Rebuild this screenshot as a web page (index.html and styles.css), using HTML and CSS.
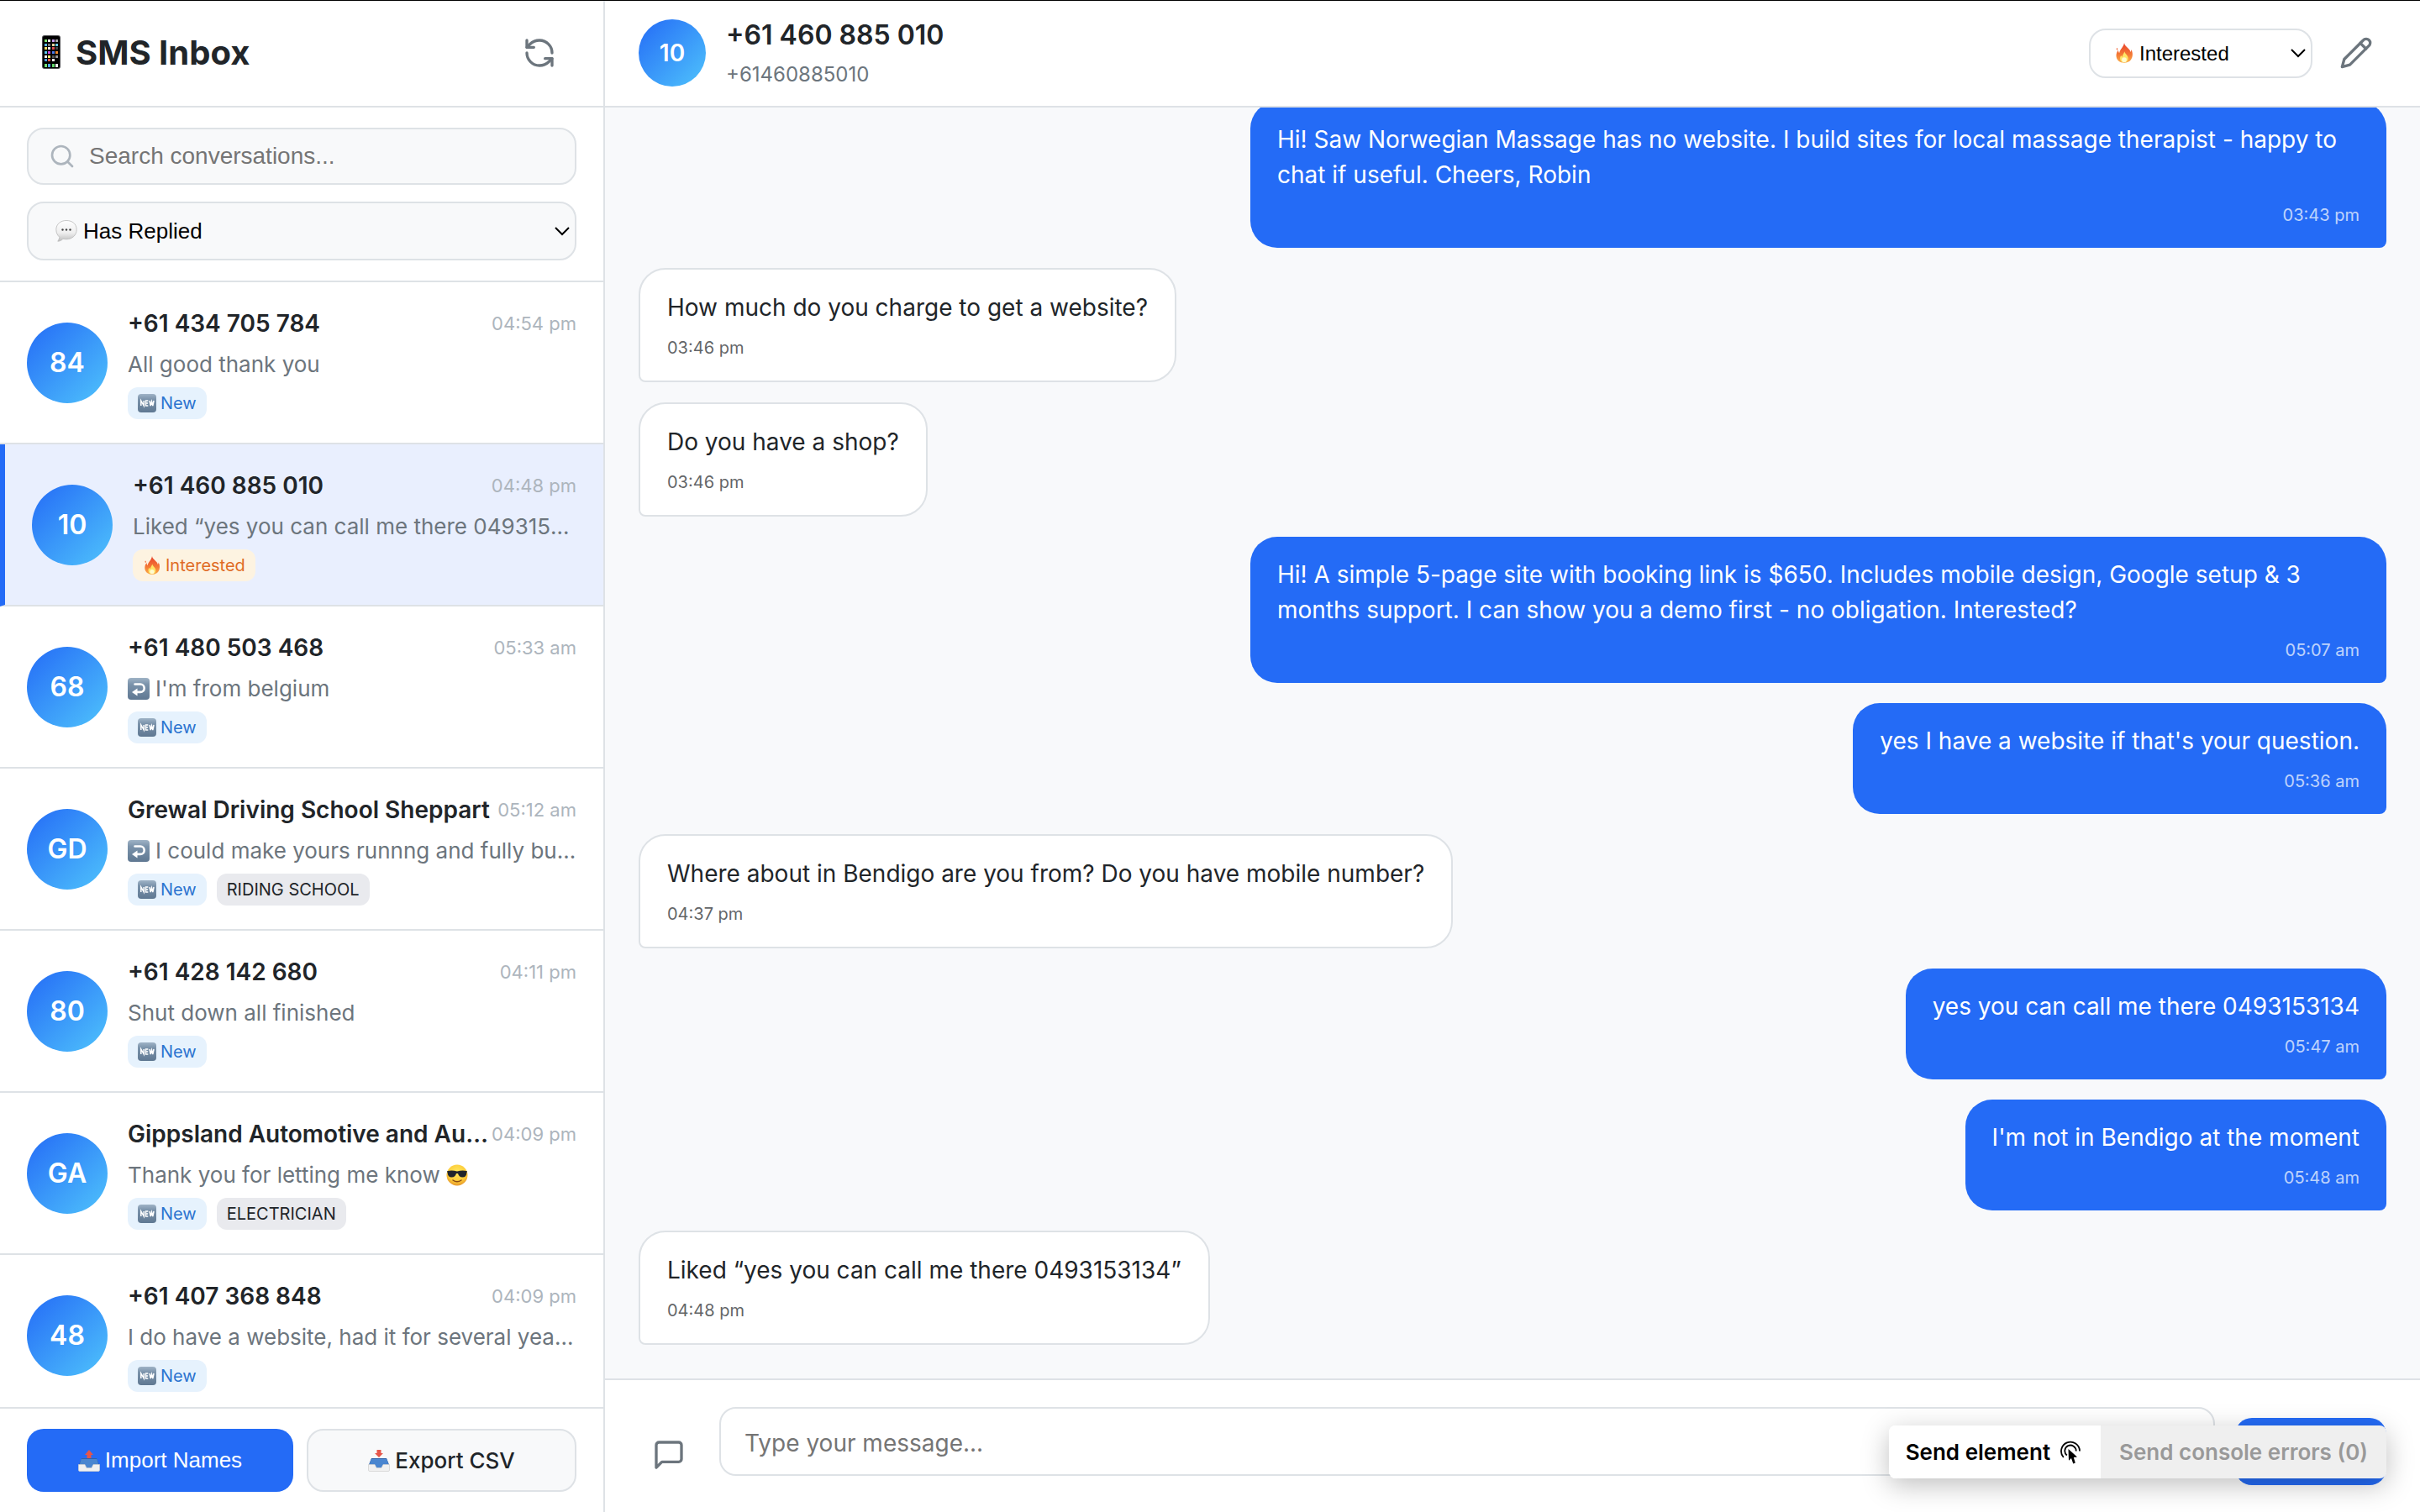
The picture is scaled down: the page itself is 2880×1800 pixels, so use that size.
FILE: index.html
```html
<!DOCTYPE html>
<html lang="en">
<head>
<meta charset="utf-8">
<title>SMS Inbox</title>
<link rel="stylesheet" href="styles.css">
</head>
<body>
<svg class="sprite" aria-hidden="true">
  <defs>
    <linearGradient id="g-tile" x1="0" y1="0" x2="0" y2="1"><stop offset="0" stop-color="#9fb3c6"/><stop offset=".3" stop-color="#7b93ab"/><stop offset="1" stop-color="#5f7892"/></linearGradient>
    <linearGradient id="g-fire" x1="0" y1="0" x2="0" y2="1"><stop offset="0" stop-color="#e8402a"/><stop offset=".6" stop-color="#f47a35"/><stop offset="1" stop-color="#fbb04a"/></linearGradient>
    <linearGradient id="g-bubble" x1="0" y1="0" x2="0" y2="1"><stop offset="0" stop-color="#ffffff"/><stop offset=".6" stop-color="#eeeeee"/><stop offset="1" stop-color="#bdbdbd"/></linearGradient>
    <radialGradient id="g-face" cx=".5" cy=".35" r=".65"><stop offset="0" stop-color="#ffe95c"/><stop offset=".7" stop-color="#fcc938"/><stop offset="1" stop-color="#e5962a"/></radialGradient>
  </defs>
  <symbol id="e-phone" viewBox="0 0 22 40">
    <rect x="0" y="0" width="22" height="40" rx="3" fill="#4a4a4e"/><rect x="1" y="1" width="20" height="38" rx="2" fill="#000"/>
    <g><rect x="3" y="5" width="3" height="3" fill="#7be06c"/><rect x="7" y="5" width="3" height="3" fill="#fff"/><rect x="12" y="5" width="3" height="3" fill="#c79af0"/><rect x="16" y="5" width="3" height="3" fill="#a8a8a8"/>
    <rect x="3" y="10" width="3" height="3" fill="#5ab8f5"/><rect x="7" y="10" width="3" height="3" fill="#777"/><rect x="12" y="10" width="3" height="3" fill="#e8d6a0"/><rect x="16" y="10" width="3" height="3" fill="#6ccdf5"/>
    <rect x="3" y="14" width="3" height="3" fill="#f2e06a"/><rect x="7" y="14" width="3" height="3" fill="#eee"/><rect x="12" y="14" width="3" height="3" fill="#e04a50"/><rect x="16" y="14" width="3" height="3" fill="#444"/>
    <rect x="3" y="19" width="3" height="3" fill="#58c7ee"/><rect x="7" y="19" width="3" height="3" fill="#c44be0"/><rect x="12" y="19" width="3" height="3" fill="#4b7de8"/><rect x="16" y="19" width="3" height="3" fill="#f08a2c"/>
    <rect x="3" y="24" width="3" height="3" fill="#fff"/><rect x="7" y="24" width="3" height="3" fill="#f5ec70"/><rect x="12" y="24" width="3" height="3" fill="#555"/><rect x="16" y="24" width="3" height="3" fill="#999"/>
    <rect x="3" y="28" width="3" height="3" fill="#4a9df0"/><rect x="7" y="28" width="3" height="3" fill="#e85a48"/><rect x="12" y="28" width="3" height="3" fill="#fff"/>
    <rect x="3" y="34" width="3" height="4" fill="#72e070"/><rect x="7" y="34" width="3" height="4" fill="#51a8f2"/><rect x="12" y="34" width="3" height="4" fill="#63d86a"/><rect x="16" y="34" width="3" height="4" fill="#f2f2f2"/></g>
  </symbol>
  <symbol id="e-speech" viewBox="0 0 26 26">
    <path d="M13 .5C6 .5.8 5 .8 11.300c0 4 1.800 7 4 9-.2 2-1 3.600-2 4.900 2.500 0 4.700-1.200 6.200-2.900 1.200.3 2.600.5 4 .5 7 0 12.200-4.900 12.200-11.500S20 .5 13 .5z" fill="url(#g-bubble)" stroke="#b9b9b9" stroke-width=".8"/>
    <circle cx="8.500" cy="11.500" r="1.200" fill="#444"/><circle cx="13" cy="11.500" r="1.200" fill="#444"/><circle cx="17.500" cy="11.500" r="1.200" fill="#444"/>
  </symbol>
  <symbol id="e-new" viewBox="0 0 22 22">
    <rect width="22" height="22" rx="4" fill="url(#g-tile)"/>
    <path d="M3.800 14V8l3.400 6V8M12.300 8H9.500v6h2.800M9.500 11h2.600M14 8l1.200 6 1.300-5 1.300 5L19 8" fill="none" stroke="#fff" stroke-width="1.500"/>
  </symbol>
  <symbol id="e-reply" viewBox="0 0 26 26">
    <rect width="26" height="26" rx="4" fill="url(#g-tile)"/>
    <path d="M8.500 7.500h6.500a4.700 4.700 0 0 1 0 9.400H9" fill="none" stroke="#fff" stroke-width="2.600" stroke-linecap="round"/><path d="M5 17l6.500-4.500v9z" fill="#fff"/>
  </symbol>
  <symbol id="e-fire" viewBox="0 0 22 22">
    <path d="M11 0c.3 4 6.300 6 6.800 10 .6-.8.800-1.600.800-2.600 2 3.200 2 7.800-.2 11-1.600 2.400-4.400 3.400-7.400 3.400-5 0-8.700-3-8.700-7.800 0-2.600 1-4.400 2.200-6 .1 1.400.4 2.300 1.200 3C6.200 7 10.500 4.500 11 0z" fill="url(#g-fire)"/>
    <path d="M3 5.500c1 .6 1.200 1.600.4 2.600-1-.6-1.200-1.600-.4-2.600z" fill="#f2683a"/>
    <path d="M11.300 9.500c.3 2.500 4 4.300 4 7.500 0 2.700-2 4.300-4.400 4.300S6.500 19.700 6.500 17c0-1.400.5-2.400 1.200-3.200.2.8.6 1.200 1.200 1.500.1-2.200 1.800-3.600 2.400-5.800z" fill="#ffe566"/>
    <ellipse cx="11" cy="18.500" rx="2.600" ry="2.600" fill="#fffbd0"/>
  </symbol>
  <symbol id="e-cool" viewBox="0 0 26 26">
    <circle cx="13" cy="13" r="12.500" fill="url(#g-face)"/>
    <path d="M1 8.200c4-1 8-.9 12 .3 4-1.200 8-1.300 12-.3l-.6 2c-.3 3.600-1.900 5.300-4.900 5.300-3.200 0-4.800-2-5.500-4.500h-2c-.7 2.500-2.300 4.500-5.500 4.500-3 0-4.600-1.700-4.900-5.300z" fill="#20242c"/>
    <path d="M8 19c3 2.200 7 2.200 10 0" fill="none" stroke="#8a4b16" stroke-width="1.500" stroke-linecap="round"/>
  </symbol>
  <symbol id="e-tray" viewBox="0 0 26 17">
    <path d="M4 1h18l3.200 8H.8z" fill="#2f62a8"/><path d="M3.600 2h18.800l2 7H18l-2 3.500h-6L8 9H1.600z" fill="#4a86d0"/>
    <path d="M.5 8.500H8l2 4h6l2-4h7.500V15a1.500 1.500 0 0 1-1.500 1.500H2A1.500 1.500 0 0 1 .5 15z" fill="#f1f1f1" stroke="#cfcfcf" stroke-width=".7"/>
  </symbol>
  <symbol id="e-outbox" viewBox="0 0 26 26"><use href="#e-tray" y="9" width="26" height="17"/><path d="M13 0l5 6h-2.500v4h-5V6H8z" fill="#e5564a"/></symbol>
  <symbol id="e-inbox" viewBox="0 0 26 26"><use href="#e-tray" y="9" width="26" height="17"/><path d="M13 9l5-5h-2.500V0h-5v4H8z" fill="#e5564a"/></symbol>
  <symbol id="i-chevron" viewBox="0 0 18 12"><path d="M1 2l8 8 8-8" fill="none" stroke="#000" stroke-width="2"/></symbol>
</svg>

<div class="app">
  <aside class="sidebar">
    <header class="bar sidebar-bar">
      <h1 class="title"><svg class="emoji-phone" aria-hidden="true"><use href="#e-phone"/></svg>SMS Inbox</h1>
      <button class="icon-btn" type="button" aria-label="Refresh">
        <svg class="icon" viewBox="0 0 24 24"><path d="M21 12a9 9 0 0 0-9-9 9.750 9.750 0 0 0-6.740 2.740L3 8"/><path d="M3 3v5h5"/><path d="M3 12a9 9 0 0 0 9 9 9.750 9.750 0 0 0 6.740-2.740L21 16"/><path d="M16 16h5v5"/></svg>
      </button>
    </header>

    <div class="filters">
      <label class="search">
        <svg class="search-icon" viewBox="0 0 24 24"><circle cx="11" cy="11" r="8"/><path d="M21 21l-4.350-4.350"/></svg>
        <input class="search-input" type="text" placeholder="Search conversations..." aria-label="Search conversations">
      </label>
      <div class="select-wrap">
        <svg class="select-emoji" aria-hidden="true"><use href="#e-speech"/></svg>
        <select class="select filter-select" aria-label="Filter conversations"><option>Has Replied</option></select>
        <svg class="select-chevron" aria-hidden="true"><use href="#i-chevron"/></svg>
      </div>
    </div>

    <ul class="list">
      <li class="item">
        <span class="avatar">84</span>
        <div class="item-body">
          <div class="item-top"><span class="name">+61 434 705 784</span><time class="item-time">04:54 pm</time></div>
          <p class="preview">All good thank you</p>
          <div class="tags"><span class="tag tag-new"><svg class="tag-emoji"><use href="#e-new"/></svg>New</span></div>
        </div>
      </li>
      <li class="item item-active">
        <span class="avatar">10</span>
        <div class="item-body">
          <div class="item-top"><span class="name">+61 460 885 010</span><time class="item-time">04:48 pm</time></div>
          <p class="preview">Liked “yes you can call me there 0493153134”</p>
          <div class="tags"><span class="tag tag-interested"><svg class="tag-emoji"><use href="#e-fire"/></svg>Interested</span></div>
        </div>
      </li>
      <li class="item">
        <span class="avatar">68</span>
        <div class="item-body">
          <div class="item-top"><span class="name">+61 480 503 468</span><time class="item-time">05:33 am</time></div>
          <p class="preview"><svg class="text-emoji lead"><use href="#e-reply"/></svg>I'm from belgium</p>
          <div class="tags"><span class="tag tag-new"><svg class="tag-emoji"><use href="#e-new"/></svg>New</span></div>
        </div>
      </li>
      <li class="item">
        <span class="avatar">GD</span>
        <div class="item-body">
          <div class="item-top"><span class="name">Grewal Driving School Sheppart</span><time class="item-time">05:12 am</time></div>
          <p class="preview"><svg class="text-emoji lead"><use href="#e-reply"/></svg>I could make yours runnng and fully built for you</p>
          <div class="tags"><span class="tag tag-new"><svg class="tag-emoji"><use href="#e-new"/></svg>New</span><span class="tag tag-type">RIDING SCHOOL</span></div>
        </div>
      </li>
      <li class="item">
        <span class="avatar">80</span>
        <div class="item-body">
          <div class="item-top"><span class="name">+61 428 142 680</span><time class="item-time">04:11 pm</time></div>
          <p class="preview">Shut down all finished</p>
          <div class="tags"><span class="tag tag-new"><svg class="tag-emoji"><use href="#e-new"/></svg>New</span></div>
        </div>
      </li>
      <li class="item">
        <span class="avatar">GA</span>
        <div class="item-body">
          <div class="item-top"><span class="name">Gippsland Automotive and Auto Electrics</span><time class="item-time">04:09 pm</time></div>
          <p class="preview">Thank you for letting me know <svg class="text-emoji"><use href="#e-cool"/></svg></p>
          <div class="tags"><span class="tag tag-new"><svg class="tag-emoji"><use href="#e-new"/></svg>New</span><span class="tag tag-type">ELECTRICIAN</span></div>
        </div>
      </li>
      <li class="item">
        <span class="avatar">48</span>
        <div class="item-body">
          <div class="item-top"><span class="name">+61 407 368 848</span><time class="item-time">04:09 pm</time></div>
          <p class="preview">I do have a website, had it for several years now</p>
          <div class="tags"><span class="tag tag-new"><svg class="tag-emoji"><use href="#e-new"/></svg>New</span></div>
        </div>
      </li>
    </ul>

    <footer class="actions">
      <button class="btn btn-primary" type="button"><svg class="text-emoji"><use href="#e-outbox"/></svg>Import Names</button>
      <button class="btn btn-outline" type="button"><svg class="text-emoji"><use href="#e-inbox"/></svg>Export CSV</button>
    </footer>
  </aside>

  <main class="chat">
    <header class="bar chat-bar">
      <span class="avatar avatar-small">10</span>
      <div class="contact">
        <h2 class="contact-name">+61 460 885 010</h2>
        <p class="contact-phone">+61460885010</p>
      </div>
      <div class="select-wrap status-wrap">
        <svg class="select-emoji status-emoji" aria-hidden="true"><use href="#e-fire"/></svg>
        <select class="select status-select" aria-label="Lead status"><option>Interested</option></select>
        <svg class="select-chevron" aria-hidden="true"><use href="#i-chevron"/></svg>
      </div>
      <button class="icon-btn" type="button" aria-label="Edit contact">
        <svg class="icon" viewBox="0 0 24 24"><path d="M17 3a2.850 2.830 0 1 1 4 4L7.500 20.500 2 22l1.500-5.500z"/><path d="M15 5l4 4"/></svg>
      </button>
    </header>

    <section class="messages">
      <article class="bubble sent"><p class="text">Hi! Saw Norwegian Massage has no website. I build sites for local massage therapist - happy to chat if useful. Cheers, Robin</p><time class="stamp">03:43 pm</time></article>
      <article class="bubble received"><p class="text">How much do you charge to get a website?</p><time class="stamp">03:46 pm</time></article>
      <article class="bubble received"><p class="text">Do you have a shop?</p><time class="stamp">03:46 pm</time></article>
      <article class="bubble sent"><p class="text">Hi! A simple 5-page site with booking link is $650. Includes mobile design, Google setup &amp; 3 months support. I can show you a demo first - no obligation. Interested?</p><time class="stamp">05:07 am</time></article>
      <article class="bubble sent"><p class="text">yes I have a website if that's your question.</p><time class="stamp">05:36 am</time></article>
      <article class="bubble received"><p class="text">Where about in Bendigo are you from? Do you have mobile number?</p><time class="stamp">04:37 pm</time></article>
      <article class="bubble sent"><p class="text">yes you can call me there 0493153134</p><time class="stamp">05:47 am</time></article>
      <article class="bubble sent"><p class="text">I'm not in Bendigo at the moment</p><time class="stamp">05:48 am</time></article>
      <article class="bubble received"><p class="text">Liked “yes you can call me there 0493153134”</p><time class="stamp">04:48 pm</time></article>
    </section>

    <form class="composer">
      <button class="icon-btn" type="button" aria-label="Templates">
        <svg class="icon" viewBox="0 0 24 24"><path d="M21 15a2 2 0 0 1-2 2H7l-4 4V5a2 2 0 0 1 2-2h14a2 2 0 0 1 2 2z"/></svg>
      </button>
      <div class="field"><textarea class="message-input" rows="1" placeholder="Type your message..." aria-label="Message"></textarea></div>
      <button class="send" type="submit" aria-label="Send"></button>
    </form>
  </main>
</div>

<div class="devtools">
  <button class="dev-btn dev-btn-pick" type="button">Send element
    <svg class="dev-icon" viewBox="0 0 24 28"><path d="M3.800 20a11 11 0 1 1 19.200-7.500M7.800 17.500a6.700 6.700 0 1 1 10.900-5" fill="none" stroke="#000" stroke-width="1.800"/><path d="M9.500 10L20 19.500l-4.200.5 2 6.500-2.500 1-2.300-6.500-3 2.700z" fill="#000"/></svg>
  </button>
  <button class="dev-btn dev-btn-off" type="button" disabled>Send console errors (0)</button>
</div>
</body>
</html>
```
FILE: styles.css
```css
* { box-sizing: border-box; }

body {
  margin: 0;
  font-family: Inter, "Liberation Sans", sans-serif;
  color: #212529;
  background: #fff;
}

h1, h2, p, ul { margin: 0; padding: 0; }
button, textarea { margin: 0; font-family: inherit; }
input, select, .btn-primary { margin: 0; font-family: "Liberation Sans", Arial, sans-serif; }

.sprite { position: absolute; width: 0; height: 0; }

.app {
  display: flex;
  height: 100vh;
  border-top: 1px solid #000;
}

/* Sidebar */
.sidebar {
  display: flex;
  flex-direction: column;
  flex: 0 0 25%;
  min-width: 0;
  border-right: 2px solid #dee2e6;
}

.bar {
  display: flex;
  align-items: center;
  flex: none;
  height: 127px;
  padding: 0 40px 1px;
  border-bottom: 2px solid #dee2e6;
}

.sidebar-bar { justify-content: space-between; }

.title {
  display: flex;
  align-items: center;
  gap: 18px;
  padding: 0 0 2px 10px;
  font-size: 40px;
  font-weight: 700;
}

.emoji-phone { width: 22px; height: 40px; }

.icon-btn {
  flex: none;
  width: 72px;
  height: 72px;
  padding: 16px;
  border: 0;
  background: none;
}

.icon {
  display: block;
  width: 40px;
  height: 40px;
  fill: none;
  stroke: #6c757d;
  stroke-width: 2;
  stroke-linecap: round;
  stroke-linejoin: round;
}

.filters {
  display: flex;
  flex-direction: column;
  flex: none;
  gap: 20px;
  padding: 24px 32px;
  border-bottom: 2px solid #dee2e6;
}

.search {
  display: flex;
  align-items: center;
  gap: 16px;
  height: 68px;
  padding: 0 24px;
  border: 2px solid #dee2e6;
  border-radius: 20px;
  background: #f8f9fa;
}

.search-icon {
  flex: none;
  width: 32px;
  height: 32px;
  fill: none;
  stroke: #adb5bd;
  stroke-width: 2;
  stroke-linecap: round;
}

.search-input {
  flex: 1;
  min-width: 0;
  padding: 0;
  border: 0;
  outline: 0;
  background: none;
  font-size: 28px;
}

.search-input::placeholder,
.message-input::placeholder { color: #757575; opacity: 1; }

.select-wrap { position: relative; display: flex; }

.select {
  width: 100%;
  border: 2px solid #dee2e6;
  border-radius: 20px;
  appearance: none;
  color: #000;
}

.filter-select {
  height: 70px;
  padding: 0 48px 0 65px;
  background: #f8f9fa;
  font-size: 26px;
}

.select-emoji {
  position: absolute;
  left: 34px;
  top: 50%;
  width: 26px;
  height: 26px;
  margin-top: -13px;
  pointer-events: none;
}

.select-chevron {
  position: absolute;
  right: 8px;
  top: 50%;
  width: 18px;
  height: 12px;
  margin-top: -6px;
  pointer-events: none;
}

.list {
  flex: 1;
  min-height: 0;
  overflow: hidden;
  list-style: none;
}

.item {
  display: flex;
  align-items: center;
  gap: 24px;
  padding: 28px 32px;
  border-bottom: 2px solid #dee2e6;
}

.item-active {
  border-left: 6px solid #246bf6;
  background: #e9effe;
}

.avatar {
  display: flex;
  align-items: center;
  justify-content: center;
  flex: none;
  width: 96px;
  height: 96px;
  border-radius: 50%;
  background: linear-gradient(135deg, #246bf6, #4fc3fc);
  color: #fff;
  font-size: 32px;
  font-weight: 600;
}

.avatar-small { width: 80px; height: 80px; font-size: 28px; }

.item-body { flex: 1; min-width: 0; }

.item-top {
  display: flex;
  align-items: center;
  justify-content: space-between;
  line-height: 42px;
}

.name {
  overflow: hidden;
  white-space: nowrap;
  text-overflow: ellipsis;
  font-size: 28px;
  font-weight: 600;
}

.item-time { flex: none; font-size: 22px; color: #adb5bd; }

.preview {
  margin: 8px 0 7px;
  overflow: hidden;
  white-space: nowrap;
  text-overflow: ellipsis;
  font-size: 26px;
  line-height: 40px;
  color: #6c757d;
}

.text-emoji { width: 26px; height: 26px; vertical-align: -4px; }
.lead { margin-right: 7px; }

.tags { display: flex; gap: 12px; }

.tag {
  display: flex;
  align-items: center;
  gap: 5px;
  height: 38px;
  padding: 0 12px;
  border-radius: 12px;
  font-size: 20px;
}

.tag-emoji { width: 22px; height: 22px; }
.tag-new { background: #e6f2fd; color: #2c74d0; }
.tag-interested { background: #fdf3e1; color: #e06b25; }
.tag-type { background: #e9eaee; color: #212529; }

.actions {
  display: flex;
  flex: none;
  gap: 16px;
  padding: 24px 32px;
  border-top: 2px solid #dee2e6;
}

.btn {
  display: flex;
  align-items: center;
  justify-content: center;
  flex: 1;
  gap: 6px;
  height: 75px;
  padding: 0 24px;
  border: 0;
  border-radius: 20px;
  font-size: 26px;
  font-weight: 500;
}

.btn-primary { background: #246bf6; color: #fff; }
.btn-outline { border: 2px solid #dee2e6; background: #f8f9fa; color: #212529; }

/* Conversation */
.chat {
  display: flex;
  flex-direction: column;
  flex: 1;
  min-width: 0;
}

.chat-bar { gap: 24px; }
.contact { flex: 1; min-width: 0; padding-top: 2px; }
.contact-name { font-size: 32px; font-weight: 600; line-height: 50px; }
.contact-phone { font-size: 24px; line-height: 44px; color: #6c757d; }

.status-select {
  width: 266px;
  height: 59px;
  padding: 0 48px 0 58px;
  background: #fff;
  font-size: 24px;
}

.status-wrap { margin-right: -8px; }
.status-emoji { left: 30px; width: 24px; height: 24px; margin-top: -12px; }

.messages {
  display: flex;
  flex-direction: column;
  justify-content: flex-end;
  flex: 1;
  gap: 24px;
  min-height: 0;
  padding: 40px;
  overflow: hidden;
  background: #f8f9fb;
}

.bubble {
  flex: none;
  max-width: 65%;
  padding: 24px 32px;
  border-radius: 32px;
}

.received {
  align-self: flex-start;
  border: 2px solid #dee2e6;
  border-bottom-left-radius: 8px;
  background: #fff;
}

.sent {
  align-self: flex-end;
  border-bottom-right-radius: 8px;
  background: #246bf6;
  color: #fff;
}

.text { font-size: 28px; line-height: 42px; }

.stamp {
  display: block;
  margin-top: 12px;
  font-size: 20px;
  line-height: 30px;
  opacity: .7;
}

.sent .stamp { text-align: right; }

.composer {
  display: flex;
  align-items: flex-end;
  flex: none;
  gap: 24px;
  padding: 32px 40px;
  border-top: 2px solid #dee2e6;
}

.field { flex: 1; padding-bottom: 11px; }

.message-input {
  display: block;
  width: 100%;
  height: 82px;
  padding: 20px 28px 16px;
  border: 2px solid #dee2e6;
  border-radius: 20px;
  background: #fff;
  font-size: 28px;
  line-height: 42px;
  resize: none;
}

.send {
  width: 180px;
  height: 80px;
  border: 0;
  border-radius: 20px;
  background: #246bf6;
}

/* Floating debug toolbar */
.devtools {
  position: fixed;
  right: 40px;
  bottom: 40px;
  display: flex;
  border-radius: 8px;
  box-shadow: 0 8px 32px rgba(0, 0, 0, .25);
}

.dev-btn {
  display: flex;
  align-items: center;
  gap: 12px;
  height: 63px;
  padding: 0 22px;
  border: 0;
  background: #fff;
  color: #000;
  font-size: 26px;
  font-weight: 600;
}

.dev-btn-pick { padding: 0 24px 0 20px; border-radius: 8px 0 0 8px; }
.dev-btn-off { border-radius: 0 8px 8px 0; background: #efefef; color: #999; }
.dev-icon { width: 24px; height: 28px; }
```
